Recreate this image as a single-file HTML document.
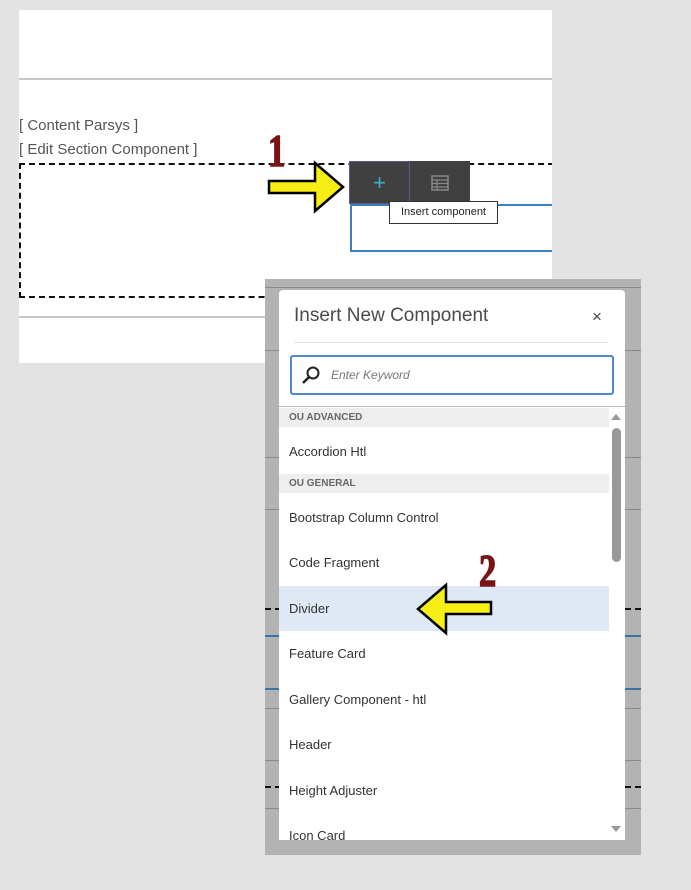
<!DOCTYPE html>
<html><head><style>
*{margin:0;padding:0;box-sizing:border-box}
body{width:691px;height:890px;background:#e3e3e3;position:relative;overflow:hidden;font-family:"Liberation Sans",sans-serif}
.a{position:absolute}
.it{position:absolute;left:0;width:330px;height:45px;line-height:45px;padding-left:10px;font-size:13px;color:#333}
.hd{position:absolute;left:0;width:330px;height:19px;line-height:19px;padding-left:10px;font-size:10px;font-weight:bold;color:#666;background:#eeeeee}
.num{font-family:'Liberation Serif',serif;font-weight:bold;font-size:46px;color:#7a1414;transform:scaleX(0.75);transform-origin:left;-webkit-text-stroke:1.5px #7a1414}
</style></head><body>
<div class="a" style="left:19px;top:10px;width:533px;height:353px;background:#fff;overflow:hidden">
<div class="a" style="left:0;top:68px;width:533px;height:2px;background:#c8c8c8"></div>
<div class="a" style="left:0;top:306px;width:533px;height:2px;background:#c8c8c8"></div>
<div class="a" style="left:0;top:107px;font-size:15px;color:#555">[ Content Parsys ]</div>
<div class="a" style="left:0;top:131px;font-size:15px;color:#555">[ Edit Section Component ]</div>
<div class="a" style="left:0;top:153px;width:545px;height:135px;border:2px dashed #111;border-right:none"></div>
<div class="a" style="left:331px;top:194px;width:210px;height:48px;border:2px solid #3d7fc1;border-right:none"></div>
</div>
<div class="a" style="left:349px;top:161px;width:121px;height:43px;background:#404040"></div>
<div class="a" style="left:349px;top:161px;width:61px;height:43px;border:1px solid #5a5a8a;color:#3ab0d0;font-size:22px;text-align:center;line-height:42px">+</div>
<svg class="a" style="left:431px;top:175px" width="18" height="16"><rect x="1" y="1" width="16" height="14" fill="none" stroke="#888" stroke-width="1.5"/><path d="M1 5H17M1 8.5H17M1 12H17M6 5V15" stroke="#888" stroke-width="1.2"/></svg>
<div class="a" style="left:389px;top:201px;width:109px;height:23px;background:#fff;border:1px solid #333;font-size:11px;line-height:21px;text-align:center;color:#222">Insert component</div>
<div class="a num" style="left:268px;top:124px">1</div>
<svg class="a" style="left:266px;top:160px" width="82" height="54"><polygon points="3,21 49,21 49,3 77,27 49,51 49,33 3,33" fill="#f6ee14" stroke="#000" stroke-width="2.5"/></svg>
<div class="a" style="left:265px;top:279px;width:376px;height:576px;background:#b3b3b3"></div>
<div class="a" style="left:265px;top:287px;width:376px;height:1px;background:#888"></div>
<div class="a" style="left:265px;top:350px;width:376px;height:1px;background:#888"></div>
<div class="a" style="left:265px;top:457px;width:376px;height:1px;background:#888"></div>
<div class="a" style="left:265px;top:509px;width:376px;height:1px;background:#888"></div>
<div class="a" style="left:265px;top:608px;width:376px;height:2px;border-top:2px dashed #111"></div>
<div class="a" style="left:265px;top:635px;width:376px;height:2px;background:#3d6fa8"></div>
<div class="a" style="left:265px;top:688px;width:376px;height:2px;background:#3d6fa8"></div>
<div class="a" style="left:265px;top:708px;width:376px;height:1px;background:#888"></div>
<div class="a" style="left:265px;top:760px;width:376px;height:1px;background:#888"></div>
<div class="a" style="left:265px;top:786px;width:376px;height:2px;border-top:2px dashed #111"></div>
<div class="a" style="left:265px;top:808px;width:376px;height:1px;background:#888"></div>
<div class="a" style="left:279px;top:290px;width:346px;height:550px;background:#fff;border-radius:4px 4px 0 0;overflow:hidden">
 <div class="a" style="left:15px;top:15px;font-size:19px;color:#4b4b4b">Insert New Component</div>
 <div class="a" style="left:313px;top:17px;font-size:17px;color:#444">×</div>
 <div class="a" style="left:15px;top:52px;width:315px;height:1px;background:#e5e5e5"></div>
 <div class="a" style="left:11px;top:65px;width:324px;height:40px;border:2px solid #4f88c8;border-radius:3px"></div>
 <svg class="a" style="left:22px;top:75px" width="20" height="20"><circle cx="12" cy="8" r="5.5" fill="none" stroke="#222" stroke-width="2"/><path d="M8 12L2 18" stroke="#222" stroke-width="2.5"/></svg>
 <div class="a" style="left:52px;top:78px;font-size:12px;font-style:italic;color:#777">Enter Keyword</div>
 <div class="a" style="left:0;top:116px;width:346px;height:1px;background:#bbb"></div>
 <div class="hd" style="top:118px">OU ADVANCED</div>
 <div class="it" style="top:139px">Accordion Htl</div>
 <div class="hd" style="top:184px">OU GENERAL</div>
 <div class="it" style="top:205px">Bootstrap Column Control</div>
 <div class="it" style="top:250px">Code Fragment</div>
 <div class="it" style="top:296px;background:#dfe8f5">Divider</div>
 <div class="it" style="top:341px">Feature Card</div>
 <div class="it" style="top:387px">Gallery Component - htl</div>
 <div class="it" style="top:432px">Header</div>
 <div class="it" style="top:478px">Height Adjuster</div>
 <div class="it" style="top:523px">Icon Card</div>
 <div class="a" style="left:332px;top:124px;width:0;height:0;border-left:5px solid transparent;border-right:5px solid transparent;border-bottom:6px solid #999"></div>
 <div class="a" style="left:333px;top:138px;width:9px;height:134px;background:#999;border-radius:5px"></div>
 <div class="a" style="left:332px;top:536px;width:0;height:0;border-left:5px solid transparent;border-right:5px solid transparent;border-top:6px solid #999"></div>
</div>
<div class="a num" style="left:479px;top:544px">2</div>
<svg class="a" style="left:414px;top:582px" width="80" height="54"><polygon points="77,20 32,20 32,3 4,27 32,51 32,32 77,32" fill="#f6ee14" stroke="#000" stroke-width="2.5"/></svg>
</body></html>
